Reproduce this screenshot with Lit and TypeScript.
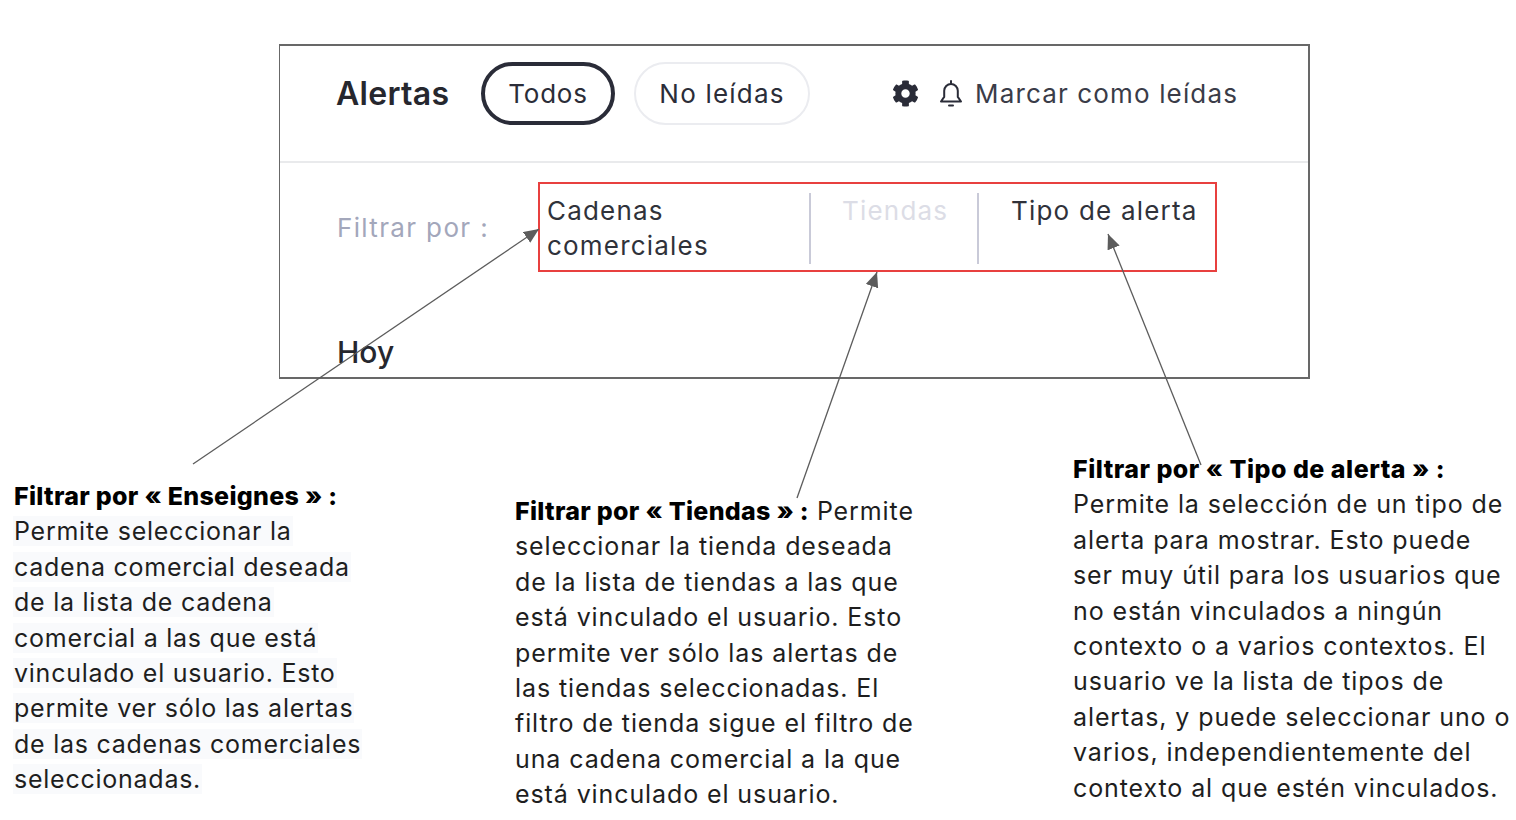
import { LitElement, html, css, svg } from 'lit';
import { customElement } from 'lit/decorators.js';

// one annotation block, lines are broken by hand like in the reference
interface Note {
  cls: string;
  title: string;
  lead?: string;
  lines: string[];
}

const NOTES: Note[] = [
  {
    cls: 'left shaded',
    title: 'Filtrar por « Enseignes » :',
    lines: [
      'Permite seleccionar la',
      'cadena comercial deseada',
      'de la lista de cadena',
      'comercial a las que está',
      'vinculado el usuario. Esto',
      'permite ver sólo las alertas',
      'de las cadenas comerciales',
      'seleccionadas.',
    ],
  },
  {
    cls: 'middle',
    title: 'Filtrar por « Tiendas » :',
    lead: ' Permite',
    lines: [
      'seleccionar la tienda deseada',
      'de la lista de tiendas a las que',
      'está vinculado el usuario. Esto',
      'permite ver sólo las alertas de',
      'las tiendas seleccionadas. El',
      'filtro de tienda sigue el filtro de',
      'una cadena comercial a la que',
      'está vinculado el usuario.',
    ],
  },
  {
    cls: 'right',
    title: 'Filtrar por « Tipo de alerta » :',
    lines: [
      'Permite la selección de un tipo de',
      'alerta para mostrar. Esto puede',
      'ser muy útil para los usuarios que',
      'no están vinculados a ningún',
      'contexto o a varios contextos. El',
      'usuario ve la lista de tipos de',
      'alertas, y puede seleccionar uno o',
      'varios, independientemente del',
      'contexto al que estén vinculados.',
    ],
  },
];

// x1,y1 -> tip
const ARROWS = [
  [193, 464, 539, 229],
  [797, 498, 877, 272],
  [1201, 465, 1108, 234],
];

const GEAR =
  'M487.4 315.7l-42.6-24.6c4.3-23.2 4.3-47 0-70.2l42.6-24.6c4.9-2.8 7.1-8.6 5.5-14-11.1-35.6-30-67.8-54.7-94.6-3.8-4.1-10-5.1-14.8-2.3L380.8 110c-17.9-15.4-38.5-27.3-60.8-35.1V25.8c0-5.6-3.9-10.5-9.4-11.7-36.7-8.2-74.3-7.8-109.2 0-5.5 1.2-9.4 6.1-9.4 11.7V75c-22.2 7.9-42.8 19.8-60.8 35.1L88.7 85.5c-4.9-2.8-11-1.9-14.8 2.3-24.7 26.7-43.6 58.9-54.7 94.6-1.7 5.4.6 11.2 5.5 14L67.3 221c-4.3 23.2-4.3 47 0 70.2l-42.6 24.6c-4.9 2.8-7.1 8.6-5.5 14 11.1 35.6 30 67.8 54.7 94.6 3.8 4.1 10 5.1 14.8 2.3l42.6-24.6c17.9 15.4 38.5 27.3 60.8 35.1v49.2c0 5.6 3.9 10.5 9.4 11.7 36.7 8.2 74.3 7.8 109.2 0 5.5-1.2 9.4-6.1 9.4-11.7v-49.2c22.2-7.9 42.8-19.8 60.8-35.1l42.6 24.6c4.9 2.8 11 1.9 14.8-2.3 24.7-26.7 43.6-58.9 54.7-94.6 1.5-5.5-.7-11.3-5.6-14.1zM256 336c-44.1 0-80-35.9-80-80s35.9-80 80-80 80 35.9 80 80-35.9 80-80 80z';

@customElement('app-root')
export class AppRoot extends LitElement {
  static styles = css`
    :host {
      display: block;
      position: relative;
      width: 1516px;
      height: 820px;
      background: #fff;
      overflow: hidden;
      font-family: Inter, 'Noto Sans', sans-serif;
      color: #2b2d38;
    }
    .panel {
      position: absolute;
      left: 279px;
      top: 44px;
      width: 1031px;
      height: 335px;
      box-sizing: border-box;
      border: 2px solid #686868;
      border-left-width: 1px;
      padding-left: 1px;
    }
    .head {
      display: flex;
      align-items: center;
      height: 117px;
      margin-left: -1px;
      padding-left: 56px;
      padding-bottom: 21px;
      box-sizing: border-box;
      border-bottom: 2px solid #e9eaec;
    }
    .title {
      width: 145px;
      font-size: 32px;
      font-weight: 600;
      letter-spacing: 0.3px;
      color: #26272e;
    }
    .pill {
      display: flex;
      align-items: center;
      justify-content: center;
      box-sizing: border-box;
      height: 63px;
      border-radius: 32px;
      font-size: 26px;
      letter-spacing: 0.8px;
    }
    .pill.on {
      width: 134px;
      border: 4px solid #2a2c38;
    }
    .pill.off {
      width: 176px;
      margin-left: 19px;
      border: 2px solid #ebecf0;
      letter-spacing: 1.2px;
    }
    .actions {
      display: flex;
      align-items: center;
      margin-left: 82px;
      font-size: 26px;
      letter-spacing: 1.15px;
      color: #3a3c48;
    }
    .gear {
      width: 27px;
      height: 27px;
      fill: #2a2c38;
    }
    .bell {
      width: 24px;
      height: 27px;
      margin-left: 20px;
      margin-right: 12px;
    }
    .filters {
      display: flex;
      align-items: center;
      padding: 19px 0 0 56px;
    }
    .filters .label {
      width: 201px;
      font-size: 26px;
      letter-spacing: 1.35px;
      color: #a3a7bb;
    }
    .box {
      display: flex;
      box-sizing: border-box;
      width: 679px;
      height: 90px;
      padding: 9px 0 8px;
      border: 2px solid #e8403f;
      font-size: 26px;
      line-height: 35px;
      letter-spacing: 1.2px;
      color: #30323a;
    }
    .opt {
      box-sizing: border-box;
      height: 71px;
      padding-left: 7px;
    }
    .opt.chain {
      width: 269px;
    }
    .opt.shop {
      width: 168px;
      padding-left: 31px;
      border-left: 2px solid #c9cad8;
      color: #dcdde6;
    }
    .opt.kind {
      padding-left: 32px;
      border-left: 2px solid #c9cad8;
    }
    .today {
      margin: 62px 0 0 56px;
      font-size: 30px;
      font-weight: 500;
      color: #26272e;
    }
    .note {
      position: absolute;
      font-size: 25px;
      line-height: 35.4px;
      letter-spacing: 0.9px;
      color: #1e1e1e;
      white-space: nowrap;
    }
    .note b {
      font-weight: 800;
      letter-spacing: 0.3px;
      color: #000;
    }
    .note .line {
      display: block;
    }
    .shaded .body {
      margin-left: -1px;
      padding: 0 1px;
      background: #f9fafc;
    }
    .left {
      left: 14px;
      top: 479px;
      letter-spacing: 0.75px;
    }
    .middle {
      left: 515px;
      top: 494px;
    }
    .right {
      left: 1073px;
      top: 452px;
    }
    .right b {
      letter-spacing: 0.5px;
    }
    svg.arrows {
      position: absolute;
      inset: 0;
      width: 1516px;
      height: 820px;
      pointer-events: none;
    }
  `;

  renderNote(n: Note) {
    return html`
      <div class="note ${n.cls}">
        <span class="line"><b>${n.title}</b>${n.lead ?? ''}</span>
        ${n.lines.map((l) => html`<span class="line"><span class="body">${l}</span></span>`)}
      </div>
    `;
  }

  render() {
    return html`
      <section class="panel">
        <div class="head">
          <div class="title">Alertas</div>
          <div class="pill on">Todos</div>
          <div class="pill off">No leídas</div>
          <div class="actions">
            <svg class="gear" viewBox="0 0 512 512"><path d="${GEAR}"></path></svg>
            <svg class="bell" viewBox="0 0 24 27" fill="none" stroke="#2a2c38" stroke-width="2">
              <path d="M2 21.5h20l-3.2-4.6V10.8a6.8 6.8 0 0 0-13.6 0v6.1z" stroke-linejoin="round"></path>
              <path d="M12 1v3" stroke-linecap="round"></path>
              <path d="M10 25.4h4" stroke-linecap="round"></path>
            </svg>
            <span>Marcar como leídas</span>
          </div>
        </div>
        <div class="filters">
          <div class="label">Filtrar por :</div>
          <div class="box">
            <div class="opt chain">Cadenas<br />comerciales</div>
            <div class="opt shop">Tiendas</div>
            <div class="opt kind">Tipo de alerta</div>
          </div>
        </div>
        <div class="today">Hoy</div>
      </section>
      ${NOTES.map((n) => this.renderNote(n))}
      <svg class="arrows" viewBox="0 0 1516 820">
        <defs>
          <marker id="tip" markerUnits="userSpaceOnUse" markerWidth="16" markerHeight="14" refX="15" refY="6.5" orient="auto">
            <path d="M0 0L15 6.5L0 13z" fill="#5c5c5c"></path>
          </marker>
        </defs>
        ${ARROWS.map(
          ([x1, y1, x2, y2]) =>
            svg`<line x1=${x1} y1=${y1} x2=${x2} y2=${y2} stroke="#5c5c5c" stroke-width="1.3" marker-end="url(#tip)"></line>`
        )}
      </svg>
    `;
  }
}
